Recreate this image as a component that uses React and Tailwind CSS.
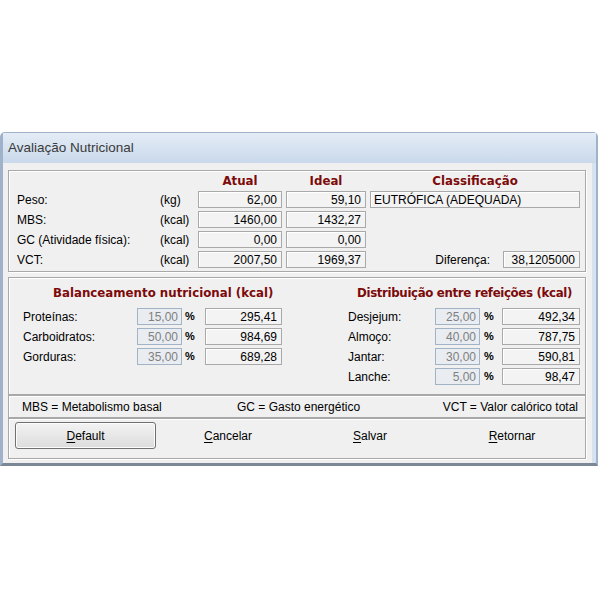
const box = 'flex h-[17px] items-center justify-end border border-[#a9a9a9] bg-[#f3f3f3] pr-[4px] shadow-[inset_1px_1px_0_#fff]';
const pctBox = 'flex h-[17px] items-center justify-end border border-[#a3b3c6] bg-[#e9edf2] pr-[3px] text-[#808080]';
const panel = 'ml-[5px] w-[578px] border border-[#a8a8a8] shadow-[inset_1px_1px_0_#ffffff,1px_1px_0_#ffffff]';
const head = 'font-["DejaVu_Sans",sans-serif] font-bold text-[11.8px] text-[#7d0a0a]';

const topRows = [
  { label: 'Peso:', unit: '(kg)', atual: '62,00', ideal: '59,10' },
  { label: 'MBS:', unit: '(kcal)', atual: '1460,00', ideal: '1432,27' },
  { label: 'GC (Atividade física):', unit: '(kcal)', atual: '0,00', ideal: '0,00' },
  { label: 'VCT:', unit: '(kcal)', atual: '2007,50', ideal: '1969,37' },
];

const balance = [
  { label: 'Proteínas:', pct: '15,00', kcal: '295,41' },
  { label: 'Carboidratos:', pct: '50,00', kcal: '984,69' },
  { label: 'Gorduras:', pct: '35,00', kcal: '689,28' },
];

const meals = [
  { label: 'Desjejum:', pct: '25,00', kcal: '492,34' },
  { label: 'Almoço:', pct: '40,00', kcal: '787,75' },
  { label: 'Jantar:', pct: '30,00', kcal: '590,81' },
  { label: 'Lanche:', pct: '5,00', kcal: '98,47' },
];

function Accel({ first, rest }) {
  return (
    <span>
      <span className="underline underline-offset-2">{first}</span>
      {rest}
    </span>
  );
}

export default function App() {
  return (
    <div className="h-[600px] w-[600px] bg-white pt-[132px] text-[12px] text-black" style={{ fontFamily: '"Liberation Sans", Arial, sans-serif' }}>
      <div className="flex h-[334px] w-[598px] flex-col rounded-t-[5px] border-l-[3px] border-r-[2px] border-t border-[#9fb2c9] border-b-[3px] border-b-[#7b8795] bg-[#d6e2ef]">
        {/* title bar */}
        <div className="flex h-[30px] items-center bg-gradient-to-b from-[#e4ecf6] to-[#c9d9eb] pl-[5px] text-[13.5px] text-[#3a3a3a]">
          Avaliação Nutricional
        </div>

        <div className="mr-[4px] flex-1 bg-[#f0f0f0] pt-[7px]">
          {/* dados antropométricos */}
          <div className={`${panel} h-[102px] pt-[1px]`}>
            <div className="flex h-[19px] items-center">
              <div className="w-[189px]" />
              <div className={`w-[84px] text-center ${head}`}>Atual</div>
              <div className={`ml-[4px] w-[80px] text-center ${head}`}>Ideal</div>
              <div className={`ml-[4px] w-[210px] text-center ${head}`}>Classificação</div>
            </div>
            <div className="flex flex-col gap-[3px]">
              {topRows.map((r, i) => (
                <div key={r.label} className="flex h-[17px] items-center">
                  <div className="w-[151px] pl-[8px]">{r.label}</div>
                  <div className="w-[38px]">{r.unit}</div>
                  <div className={`w-[84px] ${box}`}>{r.atual}</div>
                  <div className={`ml-[4px] w-[80px] ${box}`}>{r.ideal}</div>
                  <div className="ml-[4px] w-[210px]">
                    {i === 0 && (
                      <div className={`${box} justify-start pl-[3px]`}>EUTRÓFICA (ADEQUADA)</div>
                    )}
                    {i === 3 && (
                      <div className="flex items-center justify-end">
                        <span>Diferença:</span>
                        <div className={`ml-[13px] w-[77px] ${box}`}>38,1205000</div>
                      </div>
                    )}
                  </div>
                </div>
              ))}
            </div>
          </div>

          {/* balanceamento / distribuição */}
          <div className={`${panel} mt-[5px] flex h-[118px]`}>
            <div className="w-[290px]">
              <div className={`h-[30px] pl-[44px] pt-[7px] ${head}`}>Balanceamento nutricional (kcal)</div>
              <div className="flex flex-col gap-[3px]">
                {balance.map((r) => (
                  <div key={r.label} className="flex h-[17px] items-center pl-[14px]">
                    <div className="w-[114px]">{r.label}</div>
                    <div className={`w-[45px] ${pctBox}`}>{r.pct}</div>
                    <div className="w-[23px] pl-[3px] text-[11px] font-bold">%</div>
                    <div className={`w-[77px] ${box}`}>{r.kcal}</div>
                  </div>
                ))}
              </div>
            </div>
            <div className="flex-1">
              <div className={`h-[30px] pl-[58px] pt-[7px] tracking-[-0.35px] ${head}`}>Distribuição entre refeições (kcal)</div>
              <div className="flex flex-col gap-[3px]">
                {meals.map((r) => (
                  <div key={r.label} className="flex h-[17px] items-center pl-[49px]">
                    <div className="w-[87px]">{r.label}</div>
                    <div className={`w-[45px] ${pctBox}`}>{r.pct}</div>
                    <div className="w-[22px] pl-[4px] text-[11px] font-bold">%</div>
                    <div className={`w-[78px] ${box}`}>{r.kcal}</div>
                  </div>
                ))}
              </div>
            </div>
          </div>

          {/* legenda */}
          <div className={`${panel} flex h-[23px] items-center pl-[13px] pr-[7px]`}>
            <span className="w-[215px]">MBS = Metabolismo basal</span>
            <span>GC = Gasto energético</span>
            <span className="ml-auto">VCT = Valor calórico total</span>
          </div>

          {/* botões */}
          <div className={`${panel} grid h-[41px] grid-cols-4 pl-[6px] pr-[2px] pt-[3px]`}>
            <div>
              <button type="button" className="flex h-[27px] w-[141px] items-center justify-center rounded-[3px] border border-[#707070] bg-gradient-to-b from-[#f3f3f3] to-[#dcdcdc] shadow-[inset_0_0_0_1px_#fcfcfc]">
                <Accel first="D" rest="efault" />
              </button>
            </div>
            <div className="flex h-[27px] items-center justify-center"><Accel first="C" rest="ancelar" /></div>
            <div className="flex h-[27px] items-center justify-center"><Accel first="S" rest="alvar" /></div>
            <div className="flex h-[27px] items-center justify-center"><Accel first="R" rest="etornar" /></div>
          </div>
        </div>
      </div>
    </div>
  );
}
